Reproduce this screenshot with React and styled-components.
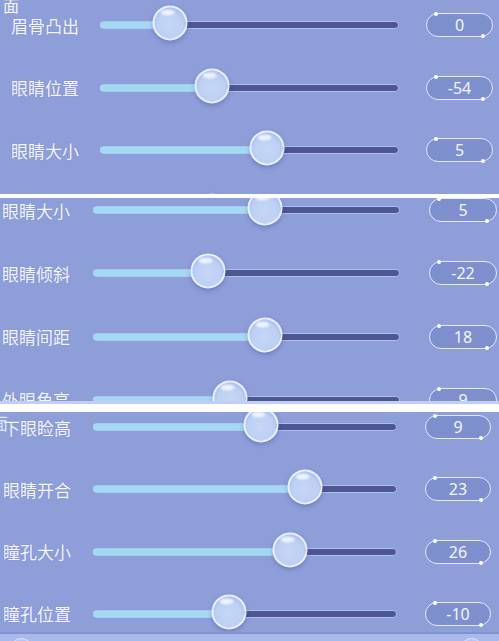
import React from 'react';
import styled, { createGlobalStyle } from 'styled-components';

const GlobalStyle = createGlobalStyle`
  html, body { margin: 0; padding: 0; background: #ffffff; }
  body {
    width: 499px;
    height: 641px;
    overflow: hidden;
    font-family: "Noto Sans CJK SC", "Noto Sans", sans-serif;
  }
`;

const Page = styled.div`
  width: 499px;
  height: 641px;
  display: flex;
  flex-direction: column;
  background: #ffffff;
`;

const Panel = styled.section`
  position: relative;
  flex: none;
  height: ${(p) => p.$h}px;
  margin-top: ${(p) => p.$gap || 0}px;
  overflow: hidden;
  background: #8d9ed9;
  box-sizing: border-box;
  border-bottom: ${(p) => (p.$edge ? '3px solid #c2cef3' : 'none')};
`;

const Scroll = styled.div`
  display: flex;
  flex-direction: column;
  margin-top: ${(p) => -p.$offset}px;
`;

const Heading = styled.div`
  height: 14px;
  padding-left: 3px;
  font-size: 16px;
  line-height: 16px;
  color: #f4f6ff;
`;

const Ghost = styled.span`
  position: absolute;
  left: -9px;
  top: 2px;
  font-size: 17px;
  line-height: 1;
  color: rgba(244, 246, 255, 0.8);
`;

const List = styled.div`
  display: flex;
  flex-direction: column;
  gap: ${(p) => p.$gap}px;
`;

const Row = styled.div`
  display: flex;
  align-items: center;
  height: 28px;
  padding-left: ${(p) => p.$inset}px;
`;

const Label = styled.span`
  flex: none;
  width: ${(p) => p.$w}px;
  font-size: 17px;
  line-height: 1;
  color: #f3f5ff;
  white-space: nowrap;
  text-shadow: 0 0 1px rgba(70, 80, 150, 0.35);
`;

const Track = styled.div`
  position: relative;
  flex: none;
  width: ${(p) => p.$w}px;
  height: 28px;
`;

const Rail = styled.div`
  position: absolute;
  left: 0;
  right: 0;
  top: 50%;
  height: 8px;
  transform: translateY(-50%);
  box-sizing: border-box;
  border-radius: 4px;
  background: #4b5693;
  border: 1.5px solid #aebdec;
`;

const Fill = styled.div`
  position: absolute;
  left: 0;
  top: 50%;
  height: 7px;
  transform: translateY(-50%);
  border-radius: 3px 0 0 3px;
  background: #a4d8f3;
`;

const Knob = styled.div`
  position: absolute;
  top: 50%;
  width: 35px;
  height: 35px;
  border-radius: 50%;
  transform: translate(-50%, -56%);
  box-sizing: border-box;
  border: 2px solid #e7eeff;
  background: radial-gradient(
    circle at 50% 58%,
    #c6d7f6 0%,
    #bcd0f4 55%,
    #a9bfee 74%,
    #eaf1ff 80%,
    #d2def8 92%,
    #aebfeb 100%
  );
  box-shadow: 0 2px 4px rgba(55, 65, 135, 0.35);

  &::after {
    content: '';
    position: absolute;
    left: 6px;
    top: 2px;
    width: 14px;
    height: 6px;
    border-radius: 50%;
    background: rgba(255, 255, 255, 0.75);
    filter: blur(1px);
  }
`;

const Value = styled.div`
  position: relative;
  flex: none;
  margin-left: ${(p) => p.$gap}px;
  width: ${(p) => p.$w}px;
  height: 24px;
  box-sizing: border-box;
  border: 1.5px solid #e3e9ff;
  border-radius: 12px;
  background: #7d8fcc;
  display: flex;
  align-items: center;
  justify-content: center;
  font-family: "Noto Sans", "Open Sans", sans-serif;
  font-size: 16px;
  color: #f3f5ff;

  &::before,
  &::after {
    content: '';
    position: absolute;
    width: 4px;
    height: 4px;
    border-radius: 50%;
    background: #ffffff;
  }
  &::before { left: 7px; top: -2px; }
  &::after { right: 7px; bottom: -2px; }
`;

const Footer = styled.div`
  position: relative;
  height: 20px;
  margin-top: ${(p) => p.$gap}px;
  border-top: 2px solid #8293d2;
  background: #a9b9ea;
`;

const RoundButton = styled.div`
  position: absolute;
  top: 4px;
  ${(p) => (p.$right ? 'right: 16px;' : 'left: 10px;')}
  width: 23px;
  height: 23px;
  border-radius: 50%;
  box-sizing: border-box;
  border: 1.5px solid #dfe7ff;
  background: #b6c5ef;
`;

const panels = [
  {
    h: 194,
    offset: 3,
    heading: '面',
    inset: 11,
    labelW: 89,
    trackW: 299,
    valueGap: 27,
    valueW: 67,
    gap: 34.5,
    rows: [
      { label: '眉骨凸出', pos: 0.234, value: '0' },
      { label: '眼睛位置', pos: 0.375, value: '-54' },
      { label: '眼睛大小', pos: 0.559, value: '5' },
      { label: '眼睛倾斜', pos: 0.375, value: '-22' },
    ],
  },
  {
    h: 206,
    gapTop: 4,
    edge: true,
    offset: 2,
    inset: 2,
    labelW: 91,
    trackW: 307,
    valueGap: 29,
    valueW: 68,
    gap: 35.3,
    rows: [
      { label: '眼睛大小', pos: 0.56, value: '5' },
      { label: '眼睛倾斜', pos: 0.375, value: '-22' },
      { label: '眼睛间距', pos: 0.56, value: '18' },
      { label: '外眼角高', pos: 0.446, value: '9' },
    ],
  },
  {
    h: 229,
    gapTop: 8,
    offset: -1,
    ghost: true,
    inset: 3,
    labelW: 90,
    trackW: 304,
    valueGap: 28,
    valueW: 66,
    gap: 34.3,
    footer: 4,
    rows: [
      { label: '下眼睑高', pos: 0.553, value: '9' },
      { label: '眼睛开合', pos: 0.697, value: '23' },
      { label: '瞳孔大小', pos: 0.648, value: '26' },
      { label: '瞳孔位置', pos: 0.447, value: '-10' },
    ],
  },
];

function SliderRow({ cfg, row }) {
  return (
    <Row $inset={cfg.inset}>
      <Label $w={cfg.labelW}>{row.label}</Label>
      <Track $w={cfg.trackW}>
        <Rail />
        <Fill style={{ width: `${row.pos * 100}%` }} />
        <Knob style={{ left: `${row.pos * 100}%` }} />
      </Track>
      <Value $gap={cfg.valueGap} $w={cfg.valueW}>{row.value}</Value>
    </Row>
  );
}

export default function App() {
  return (
    <>
      <GlobalStyle />
      <Page>
        {panels.map((cfg, i) => (
          <Panel key={i} $h={cfg.h} $gap={cfg.gapTop} $edge={cfg.edge}>
            <Scroll $offset={cfg.offset}>
              {cfg.heading && <Heading>{cfg.heading}</Heading>}
              <List $gap={cfg.gap}>
                {cfg.rows.map((row) => (
                  <SliderRow key={row.label} cfg={cfg} row={row} />
                ))}
              </List>
              {cfg.footer !== undefined && (
                <Footer $gap={cfg.footer}>
                  <RoundButton />
                  <RoundButton $right />
                </Footer>
              )}
            </Scroll>
            {cfg.ghost && <Ghost>面</Ghost>}
          </Panel>
        ))}
      </Page>
    </>
  );
}
